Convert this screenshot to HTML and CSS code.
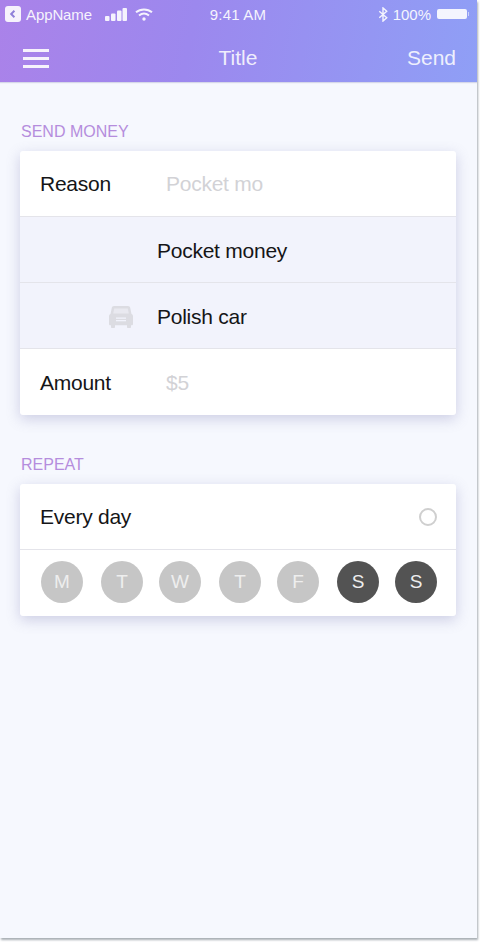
FILE: index.html
```html
<!DOCTYPE html>
<html lang="en">
<head>
  <meta charset="UTF-8">
  <title>Send Money</title>
  <link rel="stylesheet" href="styles.css">
</head>
<body>
  <div class="phone">
    <header class="top">
      <!-- Status bar -->
      <div class="status">
        <div class="status-left">
          <span class="back-app">
            <svg width="10" height="10" viewBox="0 0 10 10"><path d="M6.400 1.800 3.200 5l3.200 3.200" fill="none" stroke="#8d80d8" stroke-width="2"/></svg>
          </span>
          <span class="app-name">AppName</span>
          <svg class="signal" width="22" height="13" viewBox="0 0 22 13" fill="#fff">
            <rect x="0" y="8" width="4.500" height="5" rx="1"/>
            <rect x="6" y="5.500" width="4.500" height="7.500" rx="1"/>
            <rect x="12" y="2.500" width="4.500" height="10.500" rx="1"/>
            <rect x="17.500" y="0" width="4.500" height="13" rx="1"/>
          </svg>
          <svg class="wifi" width="18" height="13" viewBox="0 0 18 13" fill="none" stroke="#fff" stroke-width="2">
            <path d="M1 4.300C5.500.400 12.500.400 17 4.300"/>
            <path d="M4 7.500C7 5 11 5 14 7.500"/>
            <circle cx="9" cy="11" r="1.700" fill="#fff" stroke="none"/>
          </svg>
        </div>
        <div class="time">9:41 AM</div>
        <div class="status-right">
          <svg width="10" height="15" viewBox="0 0 10 16" fill="none" stroke="#fff" stroke-width="1.500">
            <path d="M1 4.500l8 7L5 15V1l4 3.500-8 7"/>
          </svg>
          <span>100%</span>
          <span class="battery"></span>
        </div>
      </div>
      <!-- Nav bar -->
      <nav class="nav">
        <div class="burger"><span></span><span></span><span></span></div>
        <div class="nav-title">Title</div>
        <div class="nav-send">Send</div>
      </nav>
    </header>

    <main class="content">
      <h2 class="section-label">SEND MONEY</h2>
      <section class="card">
        <div class="row">
          <span class="row-label">Reason</span>
          <span class="placeholder">Pocket mo</span>
        </div>
        <div class="row suggestion">
          <span class="suggestion-icon"></span>
          <span>Pocket money</span>
        </div>
        <div class="row suggestion">
          <span class="suggestion-icon">
            <svg width="24" height="22" viewBox="0 0 24 22">
              <path d="M5 0h14c1.200 0 2 .700 2.200 1.800L22.500 8c1 .400 1.500 1.200 1.500 2.300V18c0 .800-.500 1.300-1.300 1.300H22V21c0 .600-.400 1-1 1h-2c-.600 0-1-.400-1-1v-1.700H6V21c0 .600-.400 1-1 1H3c-.600 0-1-.400-1-1v-1.700h-.700C.500 19.300 0 18.800 0 18v-7.700C0 9.200.500 8.400 1.500 8L2.800 1.800C3 .700 3.800 0 5 0z" fill="#dcdce2"/>
              <path d="M5.200 2.500h13.600l1 5H4.200z" fill="#e9e9f0"/>
              <rect x="7" y="11.500" width="10" height="1.300" fill="#f2f3fc"/>
              <rect x="7" y="14" width="10" height="1.300" fill="#f2f3fc"/>
            </svg>
          </span>
          <span>Polish car</span>
        </div>
        <div class="row amount">
          <span class="row-label">Amount</span>
          <span class="placeholder">$5</span>
        </div>
      </section>

      <h2 class="section-label">REPEAT</h2>
      <section class="card">
        <div class="row every">
          <span>Every day</span>
          <span class="radio"></span>
        </div>
        <div class="row days">
          <span class="day">M</span>
          <span class="day">T</span>
          <span class="day">W</span>
          <span class="day">T</span>
          <span class="day">F</span>
          <span class="day on">S</span>
          <span class="day on">S</span>
        </div>
      </section>
    </main>
  </div>
</body>
</html>
```

FILE: styles.css
```css
html, body {
  margin: 0;
  padding: 0;
  height: 100%;
  background: #fff;
}
body {
  font-family: "Liberation Sans", Arial, sans-serif;
  color: #151517;
}
.phone {
  width: 477px;
  height: 938px;
  background: #f6f8fe;
  box-shadow: 1px 2px 2px #a9afb5;
  overflow: hidden;
}
.top {
  height: 82px;
  background: linear-gradient(100deg, #aa82e9 0%, #9c88ee 40%, #8f9ff6 100%);
  color: #fff;
  box-shadow: 0 1px 1px rgba(120, 120, 170, 0.25);
}
.status {
  height: 28px;
  padding: 0 8px 0 5px;
  display: grid;
  grid-template-columns: 1fr auto 1fr;
  align-items: center;
  font-size: 15px;
  opacity: 0.9;
}
.status-left {
  display: flex;
  align-items: center;
}
.back-app {
  width: 16px;
  height: 16px;
  border-radius: 3px;
  background: #fff;
  display: flex;
  align-items: center;
  justify-content: center;
}
.app-name {
  margin-left: 5px;
  letter-spacing: -0.1px;
}
.signal {
  margin-left: 13px;
}
.wifi {
  margin-left: 8px;
}
.time {
  padding-left: 2px;
  letter-spacing: 0.2px;
}
.status-right {
  display: flex;
  align-items: center;
  justify-content: flex-end;
  gap: 5px;
}
.battery {
  position: relative;
  width: 30px;
  height: 10px;
  margin: 0 2px 0 1px;
  background: #fff;
  border-radius: 2px;
}
.battery::after {
  content: "";
  position: absolute;
  right: -2px;
  top: 3px;
  width: 1px;
  height: 4px;
  background: rgba(255, 255, 255, 0.6);
}
.nav {
  height: 54px;
  padding: 6px 21px 0 23px;
  box-sizing: border-box;
  display: grid;
  grid-template-columns: 1fr auto 1fr;
  align-items: center;
  font-size: 21px;
}
.burger {
  display: flex;
  flex-direction: column;
  gap: 5px;
  opacity: 0.9;
}
.burger span {
  display: block;
  width: 26px;
  height: 3px;
  background: #fff;
}
.nav-title {
  padding-right: 3px;
  opacity: 0.85;
}
.nav-send {
  text-align: right;
  opacity: 0.85;
}
.content {
  padding: 0 21px 0 20px;
}
.section-label {
  margin: 0;
  padding: 41px 0 10px 1px;
  font-size: 16px;
  line-height: 18px;
  font-weight: normal;
  color: #b58ddd;
}
.card {
  background: #fff;
  border-radius: 3px;
  box-shadow: 0 4px 14px rgba(110, 110, 170, 0.3);
  overflow: hidden;
}
.row {
  height: 66px;
  box-sizing: border-box;
  padding: 0 20px;
  display: flex;
  align-items: center;
  font-size: 21px;
  letter-spacing: -0.25px;
  border-bottom: 1px solid #e4e4ea;
}
.row:last-child {
  border-bottom: 0;
}
.row-label {
  width: 126px;
  flex-shrink: 0;
}
.placeholder {
  color: #d2d2d6;
}
.suggestion {
  padding-top: 2px;
  background: #f2f3fc;
}
.amount {
  padding-top: 1px;
}
.suggestion-icon {
  width: 117px;
  padding-left: 69px;
  box-sizing: border-box;
  display: flex;
  align-items: center;
}
.every {
  justify-content: space-between;
  padding-right: 19px;
}
.radio {
  width: 18px;
  height: 18px;
  box-sizing: border-box;
  border: 2.500px solid #cfcfcf;
  border-radius: 50%;
}
.days {
  gap: 17px;
  padding-left: 21px;
  padding-bottom: 2px;
}
.day {
  width: 42px;
  height: 42px;
  border-radius: 50%;
  background: #c6c6c6;
  color: #eee;
  font-size: 19px;
  letter-spacing: 0;
  display: flex;
  align-items: center;
  justify-content: center;
  flex-shrink: 0;
}
.day:nth-child(even) {
  margin: 0 -1px 0 1px;
}
.day.on {
  background: #535353;
}
```
